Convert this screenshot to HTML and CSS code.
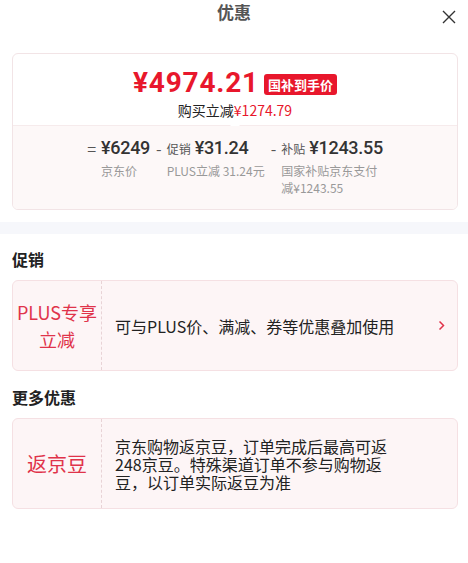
FILE: index.html
```html
<!DOCTYPE html>
<html lang="zh-CN">
<head>
    <meta charset="UTF-8">
    <title>优惠</title>
    <link rel="stylesheet" href="styles.css">
</head>
<body>
<div class="panel">
    <div class="head">
        <h1>优惠</h1>
        <span class="close">
            <svg width="14" height="14" viewBox="0 0 14 14"><path d="M1 1L13 13M13 1L1 13" stroke="#333" stroke-width="1.4" fill="none"/></svg>
        </span>
    </div>

    <div class="summary">
        <div class="summary-top">
            <div class="final">
                <span class="final-price">¥4974.21</span>
                <span class="tag">国补到手价</span>
            </div>
            <div class="save">购买立减<em>¥1274.79</em></div>
        </div>
        <div class="summary-bottom">
            <div class="part">
                <span class="op">=</span>
                <div class="part-body">
                    <div class="part-main"><b>¥6249</b></div>
                    <div class="part-note">京东价</div>
                </div>
            </div>
            <div class="part">
                <span class="op">-</span>
                <div class="part-body">
                    <div class="part-main"><i>促销</i><b>¥31.24</b></div>
                    <div class="part-note">PLUS立减 31.24元</div>
                </div>
            </div>
            <div class="part">
                <span class="op">-</span>
                <div class="part-body">
                    <div class="part-main"><i>补贴</i><b>¥1243.55</b></div>
                    <div class="part-note part-note-wrap">国家补贴京东支付减¥1243.55</div>
                </div>
            </div>
        </div>
    </div>

    <div class="band"></div>

    <h2 class="section-title">促销</h2>
    <div class="promo">
        <div class="promo-name">PLUS专享<br>立减</div>
        <div class="promo-text">可与PLUS价、满减、券等优惠叠加使用</div>
        <span class="promo-more">
            <svg width="7" height="11" viewBox="0 0 7 11"><path d="M1.5 1.5L5.5 5.5L1.5 9.5" stroke="#e0334a" stroke-width="1.5" fill="none"/></svg>
        </span>
    </div>

    <h2 class="section-title section-more">更多优惠</h2>
    <div class="promo">
        <div class="promo-name promo-name-big">返京豆</div>
        <div class="promo-text promo-text-wrap">京东购物返京豆，订单完成后最高可返248京豆。特殊渠道订单不参与购物返豆，以订单实际返豆为准</div>
    </div>
</div>
</body>
</html>
```

FILE: styles.css
```css
body {
    margin: 0;
    background: #fff;
    font-family: "Noto Sans CJK SC", "Noto Sans", sans-serif;
    color: #333;
}
.panel {
    width: 468px;
}
.head {
    position: relative;
    height: 24px;
    margin-bottom: 29px;
}
.head h1 {
    margin: 0;
    text-align: center;
    font-size: 17px;
    line-height: 24px;
    font-weight: 700;
    color: #555;
}
.head .close {
    position: absolute;
    right: 12px;
    top: 5px;
    width: 14px;
    height: 14px;
}

.summary {
    margin: 0 10px 0 12px;
    border: 1px solid #f2e4e6;
    border-radius: 6px;
    overflow: hidden;
}
.summary-top {
    position: relative;
    padding: 13px 0 5px;
    text-align: center;
    border-bottom: 1px solid #f6ebec;
}
.summary-top:after {
    content: "";
    position: absolute;
    left: 50%;
    bottom: -1px;
    margin-left: -5px;
    border: 5px solid transparent;
    border-bottom-color: #fff;
}
.final {
    display: flex;
    justify-content: center;
    align-items: center;
    gap: 5px;
    height: 32px;
}
.final-price {
    font-family: Roboto, "Noto Sans", sans-serif;
    font-size: 28px;
    font-weight: 700;
    letter-spacing: 0.8px;
    color: #e8172c;
    line-height: 32px;
}
.tag {
    background: #e8172c;
    color: #fff;
    font-size: 13px;
    font-weight: 700;
    line-height: 21px;
    padding: 0 4px;
    border-radius: 3px;
    margin-top: 2px;
}
.save {
    margin-top: 1px;
    font-size: 14px;
    line-height: 20px;
    color: #222;
}
.save em {
    font-style: normal;
    color: #e8172c;
}
.summary-bottom {
    display: flex;
    justify-content: center;
    gap: 6px;
    padding: 10px 0 13px;
    background: #fdf8f8;
}
.part {
    display: flex;
    gap: 5px;
}
.op {
    font-size: 16px;
    line-height: 24px;
    color: #555;
}
.part-main {
    display: flex;
    align-items: baseline;
    gap: 4px;
    height: 24px;
    line-height: 24px;
}
.part-main i {
    font-style: normal;
    font-size: 12px;
    color: #555;
}
.part-main b {
    font-family: Roboto, "Noto Sans", sans-serif;
    font-size: 18px;
    font-weight: 500;
    letter-spacing: -0.3px;
    color: #333;
}
.part-note {
    margin-top: 2px;
    font-size: 12px;
    line-height: 17px;
    color: #999;
}
.part-note-wrap {
    width: 98px;
    word-break: break-all;
}

.band {
    height: 12px;
    margin-top: 12px;
    background: #f6f7fb;
}
.section-title {
    margin: 14px 0 10px 12px;
    font-size: 16px;
    line-height: 22px;
    font-weight: 700;
    color: #222;
}
.section-more {
    margin-top: 15px;
}

.promo {
    display: flex;
    align-items: center;
    height: 89px;
    margin: 0 10px 0 12px;
    border: 1px solid #f5e0e3;
    border-radius: 6px;
    background: #fdf5f6;
}
.promo-name {
    width: 88px;
    height: 100%;
    display: flex;
    align-items: center;
    justify-content: center;
    text-align: center;
    border-right: 1px dashed #e8d3d6;
    font-size: 18px;
    line-height: 27px;
    color: #e0334a;
}
.promo-name-big {
    font-size: 20px;
}
.promo-text {
    flex: 1;
    padding-left: 13px;
    font-size: 16px;
    line-height: 20px;
    color: #222;
}
.promo-text-wrap {
    flex: none;
    width: 280px;
    line-height: 18px;
}
.promo-more {
    width: 7px;
    height: 11px;
    margin-right: 12px;
    display: flex;
}
```
